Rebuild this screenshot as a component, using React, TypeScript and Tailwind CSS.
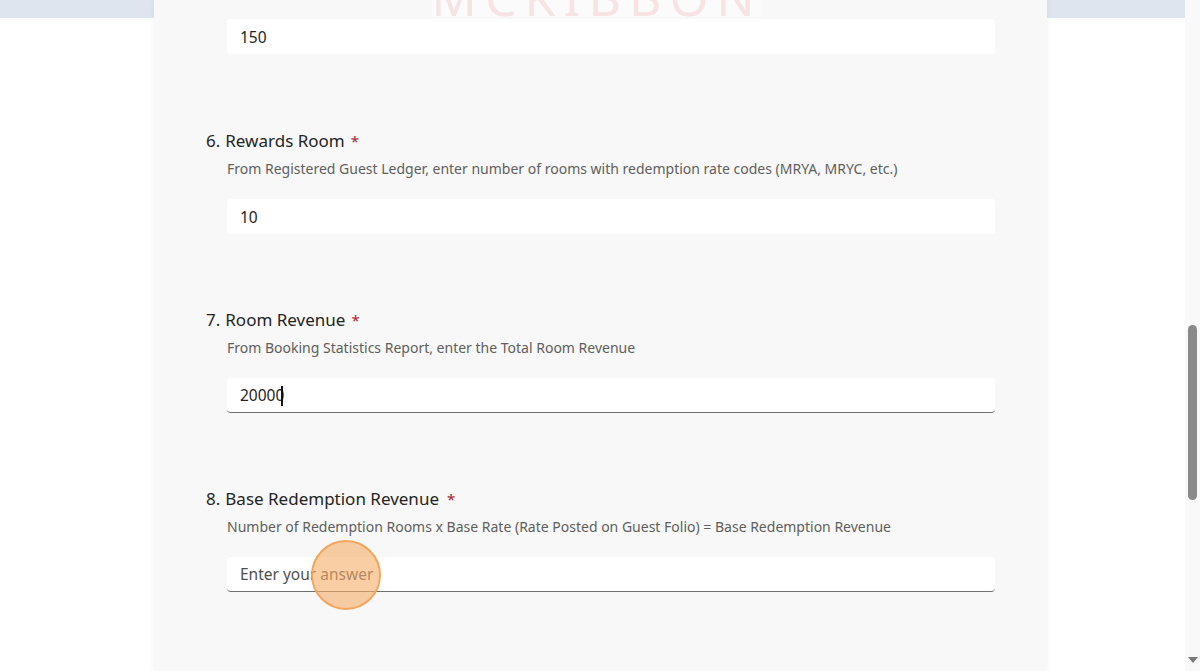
const font = { fontFamily: '"Noto Sans", "Open Sans", Arial, sans-serif' };

type Question = {
  num: number;
  title: string;
  desc: string;
  value: string;
  placeholder?: boolean;
  underline?: boolean;
  caret?: boolean;
  wideStar?: boolean;
};

const questions: Question[] = [
  {
    num: 6,
    title: "Rewards Room",
    desc: "From Registered Guest Ledger, enter number of rooms with redemption rate codes (MRYA, MRYC, etc.)",
    value: "10",
  },
  {
    num: 7,
    title: "Room Revenue",
    desc: "From Booking Statistics Report, enter the Total Room Revenue",
    value: "20000",
    underline: true,
    caret: true,
  },
  {
    num: 8,
    title: "Base Redemption Revenue",
    desc: "Number of Redemption Rooms x Base Rate (Rate Posted on Guest Folio) = Base Redemption Revenue",
    value: "Enter your answer",
    placeholder: true,
    underline: true,
    wideStar: true,
  },
];

function AnswerBox({ q }: { q: Question }) {
  return (
    <div
      className={
        "relative ml-[21px] flex h-[35px] items-center rounded-[4px] bg-white pl-[13px] pt-[2px] text-[15.5px] " +
        (q.underline ? "border-b-[1.5px] border-[#707070] " : "") +
        (q.placeholder ? "text-[#505050]" : "text-[#242424]")
      }
    >
      <span>{q.value}</span>
      {q.caret && <span className="ml-[-3px] inline-block h-[20px] w-[1.5px] bg-[#111]" />}
      {q.placeholder && (
        <span className="absolute left-[84px] top-[-17px] h-[70px] w-[70px] rounded-full border-2 border-[#f2a65e] bg-[#f6ad68]/60" />
      )}
    </div>
  );
}

function QuestionBlock({ q }: { q: Question }) {
  return (
    <div className="mb-[74px]">
      <div className="flex h-[24px] items-center text-[17px] text-[#242424]">
        <span>{q.num}.</span>
        <span className="ml-[5px]">{q.title}</span>
        <span className={(q.wideStar ? "ml-[8px]" : "ml-[6px]") + " text-[15px] text-[#a4262c]"}>*</span>
      </div>
      <p className="ml-[21px] mt-[6px] h-[20px] text-[14px] leading-[20px] text-[#605e5c]">{q.desc}</p>
      <div className="mt-[20px]">
        <AnswerBox q={q} />
      </div>
    </div>
  );
}

export default function App() {
  return (
    <div className="flex h-[671px] w-[1200px] overflow-hidden bg-white" style={font}>
      <div className="flex flex-1">
        <div className="w-[154px]">
          <div className="h-[18px] bg-[#dfe5ee]" />
        </div>
        <div className="relative w-[893px] bg-[#f8f8f8] shadow-[0_0_6px_rgba(0,0,0,0.06)]">
          <div className="absolute left-[278px] top-0 flex h-[17px] w-[330px] items-end justify-center overflow-hidden bg-[#fbfbfb]">
            <span className="mb-[-18px] text-[50px] font-normal tracking-[8px] text-[#f7e3e3]">MCKIBBON</span>
          </div>
          <div className="relative px-[52px] pt-[19px]">
            <div className="mb-[75px] ml-[21px] flex h-[35px] items-center rounded-[4px] bg-white pl-[13px] pt-[2px] text-[15.5px] text-[#242424]">
              150
            </div>
            {questions.map((q) => (
              <QuestionBlock key={q.num} q={q} />
            ))}
          </div>
        </div>
        <div className="flex-1">
          <div className="h-[18px] bg-[#dfe5ee]" />
        </div>
      </div>
      <div className="relative w-[15px] bg-[#f9f9f9]">
        <div className="absolute left-[3px] top-[325px] h-[175px] w-[9px] rounded-full bg-[#8a8a8a]" />
        <div className="absolute bottom-[8px] left-[3px] h-0 w-0 border-x-[5px] border-t-[6px] border-x-transparent border-t-[#7a7a7a]" />
      </div>
    </div>
  );
}
